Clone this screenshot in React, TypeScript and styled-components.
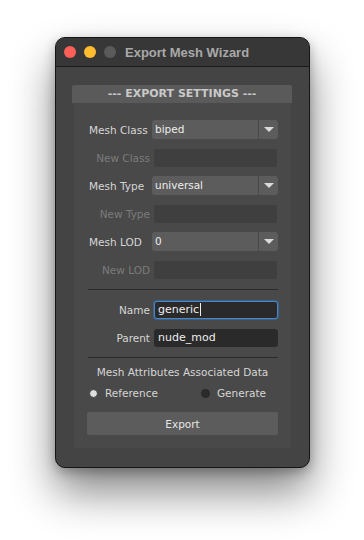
import styled, { createGlobalStyle } from "styled-components";

const GlobalStyle = createGlobalStyle`
  html, body {
    height: 100%;
  }
  body {
    margin: 0;
    background: #ffffff;
    font-family: "DejaVu Sans", "Liberation Sans", sans-serif;
  }
  #root {
    min-height: 540px;
    padding-top: 1px;
    box-sizing: border-box;
  }
`;

interface FieldRow {
  label: string;
  value?: string;
  kind: "select" | "disabled";
}

const ROWS: FieldRow[] = [
  { label: "Mesh Class", value: "biped", kind: "select" },
  { label: "New Class", kind: "disabled" },
  { label: "Mesh Type", value: "universal", kind: "select" },
  { label: "New Type", kind: "disabled" },
  { label: "Mesh LOD", value: "0", kind: "select" },
  { label: "New LOD", kind: "disabled" },
];

const App = () => {
  return (
    <>
      <GlobalStyle />
      <StWindow>
        <StTitleBar>
          <StLight color="#fe5f57" />
          <StLight color="#febc2e" />
          <StLight color="#5a5a5a" />
          <StTitle>Export Mesh Wizard</StTitle>
        </StTitleBar>
        <StBody>
          <StSectionHeader>--- EXPORT SETTINGS ---</StSectionHeader>
          <StPanel>
            <StGrid>
              {ROWS.map((row) =>
                row.kind === "select" ? (
                  <StRow key={row.label}>
                    <StLabel>{row.label}</StLabel>
                    <StSelect>
                      <StSelectValue>{row.value}</StSelectValue>
                      <StArrowBox>
                        <StArrow />
                      </StArrowBox>
                    </StSelect>
                  </StRow>
                ) : (
                  <StRow key={row.label}>
                    <StLabel $muted>{row.label}</StLabel>
                    <StDisabledInput />
                  </StRow>
                )
              )}
            </StGrid>
            <StDivider />
            <StGrid>
              <StRow>
                <StLabel $right>Name</StLabel>
                <StTextInput $focused>
                  generic
                  <StCaret />
                </StTextInput>
              </StRow>
              <StRow>
                <StLabel $right>Parent</StLabel>
                <StTextInput>nude_mod</StTextInput>
              </StRow>
            </StGrid>
            <StDivider />
            <StCaption>Mesh Attributes Associated Data</StCaption>
            <StRadioRow>
              <StRadioItem>
                <StRadio $checked />
                Reference
              </StRadioItem>
              <StRadioItem>
                <StRadio />
                Generate
              </StRadioItem>
            </StRadioRow>
            <StButton>Export</StButton>
          </StPanel>
        </StBody>
      </StWindow>
    </>
  );
};

export default App;

const StWindow = styled.div`
  width: 253px;
  margin: 36px 0 0 55px;
  border: 1px solid #151515;
  border-radius: 10px;
  overflow: hidden;
  background: #444444;
  box-shadow: 0 24px 44px rgba(0, 0, 0, 0.48), 0 4px 12px rgba(0, 0, 0, 0.28);
`;
const StTitleBar = styled.div`
  display: flex;
  align-items: center;
  height: 28px;
  padding-left: 8px;
  background: #373737;
  border-bottom: 1px solid #1b1b1b;
`;
const StLight = styled.span<{ color: string }>`
  width: 12px;
  height: 12px;
  margin-right: 8px;
  border-radius: 50%;
  background: ${({ color }) => color};
`;
const StTitle = styled.div`
  margin-left: 1px;
  color: #a9a9a9;
  font: bold 13px "Liberation Sans", Arial, sans-serif;
`;
const StBody = styled.div`
  padding: 18px 17px 19px 16px;
`;
const StSectionHeader = styled.div`
  height: 18px;
  line-height: 18px;
  text-align: center;
  border-radius: 2px 2px 0 0;
  background: #5a5a5a;
  color: #c9c9c9;
  font-size: 11px;
  font-weight: bold;
`;
const StPanel = styled.div`
  display: flex;
  flex-direction: column;
  margin: 0 1px 0 2px;
  padding: 17px 13px 13px 13px;
  background: #494949;
  font-size: 10.5px;
`;
const StGrid = styled.div`
  display: flex;
  flex-direction: column;
  gap: 9px;
  & + & {
    gap: 10px;
  }
`;
const StRow = styled.div`
  display: grid;
  grid-template-columns: 63px 1fr;
  column-gap: 2px;
  align-items: center;
  height: 19px;
`;
const StLabel = styled.span<{ $muted?: boolean; $right?: boolean }>`
  padding-left: 2px;
  text-align: ${({ $muted, $right }) => ($muted || $right ? "right" : "left")};
  color: ${({ $muted }) => ($muted ? "#7b7b7b" : "#d6d6d6")};
  white-space: nowrap;
`;
const StSelect = styled.div`
  display: flex;
  height: 19px;
  border-radius: 3px;
  background: #5c5c5c;
  overflow: hidden;
`;
const StSelectValue = styled.span`
  flex: 1;
  padding-left: 3px;
  line-height: 19px;
  color: #ececec;
`;
const StArrowBox = styled.span`
  display: flex;
  justify-content: center;
  align-items: center;
  width: 19px;
  border-left: 1px solid #4a4a4a;
`;
const StArrow = styled.span`
  width: 0;
  height: 0;
  border-left: 5px solid transparent;
  border-right: 5px solid transparent;
  border-top: 5px solid #dadada;
`;
const StDisabledInput = styled.div`
  height: 18px;
  margin: 0 1px 0 2px;
  border-radius: 2px;
  background: #3f3f3f;
`;
const StTextInput = styled.div<{ $focused?: boolean }>`
  display: flex;
  align-items: center;
  box-sizing: border-box;
  height: 18px;
  margin: 0 0 0 2px;
  padding-left: ${({ $focused }) => ($focused ? "3px" : "4px")};
  border-radius: 3px;
  background: #2a2a2a;
  color: #eeeeee;
  border: ${({ $focused }) => ($focused ? "1px solid #4f86c0" : "none")};
  box-shadow: ${({ $focused }) => ($focused ? "0 0 0 1px #37618e" : "none")};
  font-size: 11px;
`;
const StCaret = styled.span`
  width: 1px;
  height: 13px;
  margin-left: 1px;
  background: #eeeeee;
`;
const StDivider = styled.div`
  height: 1px;
  margin: 10px 0 10px 1px;
  background: #2b2b2b;
`;
const StCaption = styled.div`
  margin-top: -2px;
  text-align: center;
  color: #d6d6d6;
`;
const StRadioRow = styled.div`
  display: flex;
  justify-content: space-between;
  margin-top: 9px;
  padding: 0 12px 0 2px;
  color: #d6d6d6;
`;
const StRadioItem = styled.label`
  display: flex;
  align-items: center;
  gap: 7px;
`;
const StRadio = styled.span<{ $checked?: boolean }>`
  box-sizing: border-box;
  width: 9px;
  height: 9px;
  border-radius: 50%;
  background: ${({ $checked }) => ($checked ? "#dedede" : "#2b2b2b")};
  border: 1px solid ${({ $checked }) => ($checked ? "#3a3a3a" : "#262626")};
`;
const StButton = styled.button`
  height: 23px;
  margin-top: 13px;
  padding: 0;
  border: none;
  border-radius: 2px;
  background: #5c5c5c;
  color: #e6e6e6;
  font-family: "DejaVu Sans", sans-serif;
  font-size: 10.5px;
`;
